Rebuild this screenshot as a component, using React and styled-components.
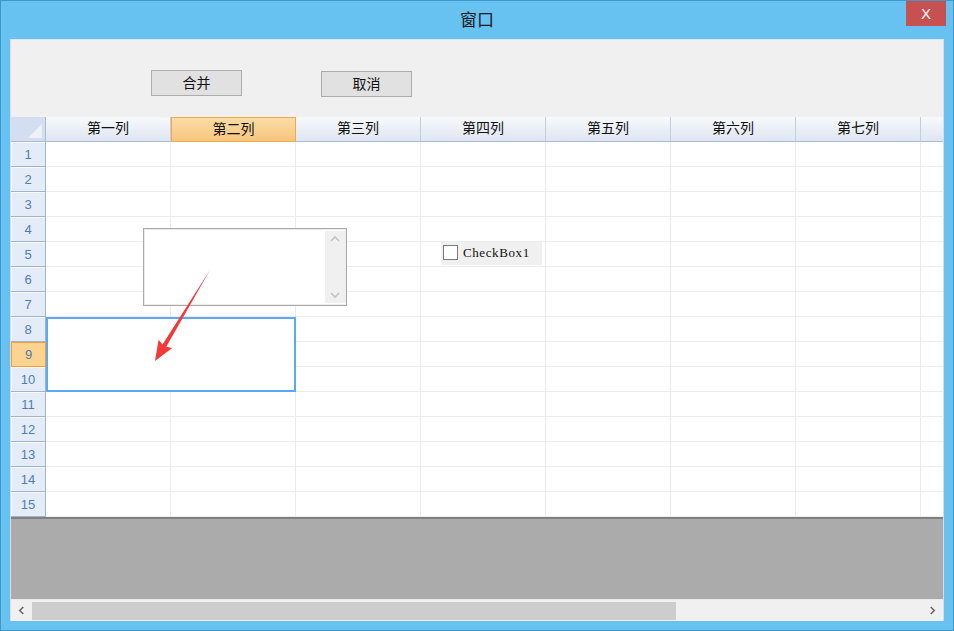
import React from "react";
import styled, { createGlobalStyle, css } from "styled-components";

const GlobalStyle = createGlobalStyle`
  html, body { margin: 0; padding: 0; background: #ffffff; }
  body { font-family: "Noto Sans CJK SC", "Noto Sans", sans-serif; }
  * { box-sizing: border-box; }
`;

const COLS = ["第一列", "第二列", "第三列", "第四列", "第五列", "第六列", "第七列", ""];
const ROWS = Array.from({ length: 15 }, (_, i) => i + 1);
const SEL_COL = 1;
const SEL_ROW = 9;

const Frame = styled.div`
  width: 954px;
  height: 631px;
  background: #67c1f1;
  border: 1px solid #3f96cc;
  display: flex;
  flex-direction: column;
  padding: 0 9px 9px 9px;
`;

const TitleBar = styled.div`
  height: 38px;
  position: relative;
  display: flex;
  align-items: center;
  justify-content: center;
  font-size: 17px;
  color: #1c1c1c;
  padding-bottom: 3px;
`;

const CloseButton = styled.div`
  position: absolute;
  top: 0;
  right: -2px;
  width: 40px;
  height: 25px;
  background: #c75050;
  color: #ffffff;
  font-family: "Liberation Sans", Arial, sans-serif;
  font-size: 15px;
  display: flex;
  align-items: center;
  justify-content: center;
`;

const Panel = styled.div`
  flex: 1;
  display: flex;
  flex-direction: column;
  background: #f0f0f0;
  border-left: 1px solid #d6dde6;
  border-right: 1px solid #d6dde6;
  border-top: 1px solid #dfe6ee;
`;

const Toolbar = styled.div`
  height: 77px;
  display: flex;
  align-items: flex-start;
  padding: 30px 0 0 140px;
  gap: 79px;
  background: #f0f0f0;
`;

const Button = styled.button`
  width: 91px;
  height: 26px;
  margin-top: ${(p) => p.$offset || 0}px;
  border: 1px solid #adadad;
  background: #e1e1e1;
  font-family: "Noto Sans CJK SC", sans-serif;
  font-size: 14px;
  color: #111;
  padding: 0 0 3px 0;
  line-height: 20px;
`;

const GridWrap = styled.div`
  position: relative;
  height: 400px;
  overflow: hidden;
  background: #ffffff;
`;

const Grid = styled.div`
  display: grid;
  grid-template-columns: 35px repeat(8, 125px);
  grid-template-rows: repeat(16, 25px);
`;

const Corner = styled.div`
  background: #d3dff0;
  border-right: 1px solid #a9bcd6;
  border-bottom: 1px solid #a9bcd6;
  position: relative;
  &::after {
    content: "";
    position: absolute;
    right: 3px;
    bottom: 3px;
    border-left: 14px solid transparent;
    border-bottom: 14px solid #eef2f8;
  }
`;

const ColHeader = styled.div`
  display: flex;
  align-items: center;
  justify-content: center;
  font-size: 14px;
  color: #111;
  padding-bottom: 4px;
  background: linear-gradient(#f7f9fc, #dfe6f1);
  border-right: 1px solid #c3cfe0;
  border-bottom: 1px solid #a9bcd6;
  ${(p) =>
    p.$active &&
    css`
      background: linear-gradient(#fbdca4, #f6c57f);
      border: 1px solid #f2a84d;
    `}
`;

const RowHeader = styled.div`
  display: flex;
  align-items: center;
  justify-content: center;
  font-family: "Liberation Sans", Arial, sans-serif;
  font-size: 13px;
  color: #4f7db8;
  background: #e4ecf7;
  border-right: 1px solid #9fb3cc;
  border-bottom: 1px solid #9fb3cc;
  box-shadow: inset 1px 1px 0 #f6f9fd;
  ${(p) =>
    p.$active &&
    css`
      background: #fdd48f;
      border: 1px solid #f0a040;
      box-shadow: none;
    `}
`;

const Cell = styled.div`
  border-right: 1px solid #ececec;
  border-bottom: 1px solid #ececec;
  background: #ffffff;
`;

const MergedCell = styled.div`
  grid-column: 2 / span 2;
  grid-row: 9 / span 3;
  border: 2px solid #5aaaf2;
  background: #ffffff;
`;

const TextBox = styled.div`
  position: absolute;
  left: 132px;
  top: 111px;
  width: 204px;
  height: 78px;
  border: 1px solid #a9a9a9;
  background: #ffffff;
  display: flex;
  justify-content: flex-end;
  box-shadow: inset 0 0 0 1px #ececec;
`;

const VScroll = styled.div`
  width: 20px;
  margin: 2px 1px 2px 0;
  background: #f0f0f0;
  display: flex;
  flex-direction: column;
  justify-content: space-between;
  align-items: center;
  padding: 3px 0;
`;

const CheckBoxWrap = styled.div`
  position: absolute;
  left: 430px;
  top: 125px;
  width: 101px;
  height: 23px;
  background: #f0f0f0;
  display: flex;
  align-items: center;
  gap: 5px;
  padding: 0 0 2px 2px;
  font-family: "Liberation Serif", "Times New Roman", serif;
  font-size: 13px;
  letter-spacing: 0.6px;
  color: #111;
`;

const Box = styled.span`
  width: 15px;
  height: 15px;
  border: 1px solid #7a7a7a;
  background: #ffffff;
`;

const Overlay = styled.svg`
  position: absolute;
  left: -11px;
  top: -117px;
  pointer-events: none;
`;

const Bottom = styled.div`
  height: 82px;
  background: #ababab;
  border-top: 2px solid #808080;
`;

const HScroll = styled.div`
  height: 22px;
  background: #f0f0f0;
  display: flex;
  align-items: center;
  border-top: 1px solid #e8e8e8;
`;

const Arrow = styled.div`
  width: 21px;
  display: flex;
  justify-content: center;
  align-items: center;
`;

const Track = styled.div`
  flex: 1;
  height: 18px;
  display: flex;
`;

const Thumb = styled.div`
  width: 644px;
  height: 100%;
  background: #cdcdcd;
`;

const Chevron = ({ dir, color = "#c2c2c2", size = 10 }) => {
  const paths = {
    up: "M1 7 L5 3 L9 7",
    down: "M1 3 L5 7 L9 3",
    left: "M7 1 L3 5 L7 9",
    right: "M3 1 L7 5 L3 9",
  };
  return (
    <svg width={size} height={size} viewBox="0 0 10 10">
      <path d={paths[dir]} fill="none" stroke={color} strokeWidth="1.6" />
    </svg>
  );
};

export default function App() {
  return (
    <>
      <GlobalStyle />
      <Frame>
        <TitleBar>
          窗口
          <CloseButton>X</CloseButton>
        </TitleBar>
        <Panel>
          <Toolbar>
            <Button>合并</Button>
            <Button $offset={1}>取消</Button>
          </Toolbar>
          <GridWrap>
            <Grid>
              <Corner />
              {COLS.map((c, i) => (
                <ColHeader key={i} $active={i === SEL_COL}>
                  {c}
                </ColHeader>
              ))}
              {ROWS.map((r) => (
                <React.Fragment key={r}>
                  <RowHeader $active={r === SEL_ROW}>{r}</RowHeader>
                  {COLS.map((_, ci) => {
                    const merged = r >= 8 && r <= 10 && ci <= 1;
                    if (merged) {
                      return r === 8 && ci === 0 ? <MergedCell key={ci} /> : null;
                    }
                    return <Cell key={ci} />;
                  })}
                </React.Fragment>
              ))}
            </Grid>
            <TextBox>
              <VScroll>
                <Chevron dir="up" />
                <Chevron dir="down" />
              </VScroll>
            </TextBox>
            <CheckBoxWrap>
              <Box />
              CheckBox1
            </CheckBoxWrap>
            <Overlay width="954" height="631" viewBox="0 0 954 631">
              <polygon
                points="210,270 166.3,346.7 172.2,348.1 155,361 158.6,339.7 162.5,344.5"
                fill="#f23a3a"
              />
            </Overlay>
          </GridWrap>
          <Bottom />
          <HScroll>
            <Arrow>
              <Chevron dir="left" color="#606060" size={9} />
            </Arrow>
            <Track>
              <Thumb />
            </Track>
            <Arrow>
              <Chevron dir="right" color="#606060" size={9} />
            </Arrow>
          </HScroll>
        </Panel>
      </Frame>
    </>
  );
}
